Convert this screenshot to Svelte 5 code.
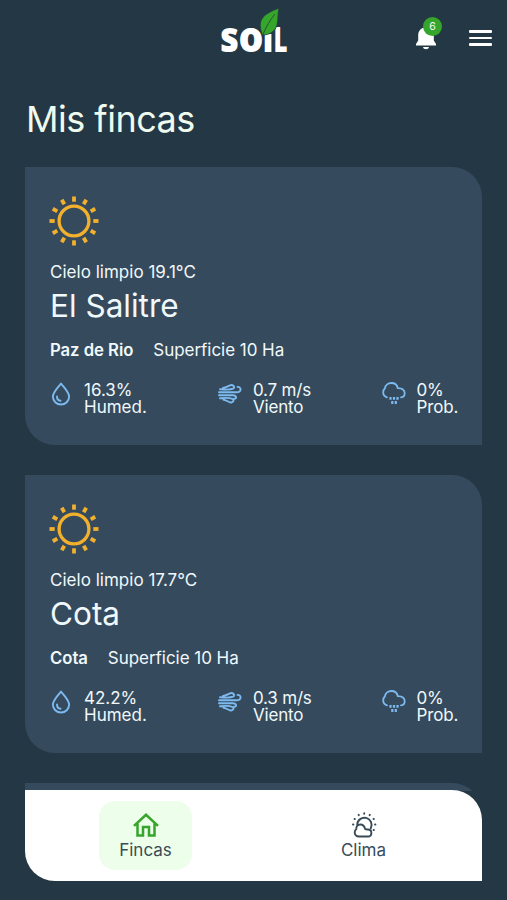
<script>
  const farms = [
    { name: 'El Salitre', sky: 'Cielo limpio 19.1°C', town: 'Paz de Rio', area: 'Superficie 10 Ha', humidity: '16.3%', wind: '0.7 m/s', rain: '0%' },
    { name: 'Cota', sky: 'Cielo limpio 17.7°C', town: 'Cota', area: 'Superficie 10 Ha', humidity: '42.2%', wind: '0.3 m/s', rain: '0%' }
  ];
  const rays = Array.from({ length: 12 }, (_, i) => i * 30);
  const smallRays = [-150, -120, -90, -60, -30, 0, 30, 180];
</script>

<div class="screen">
  <header>
    <svg class="logo" width="70" height="50" viewBox="0 0 70 50" role="img" aria-label="soil">
      <g class="word">
        <text x="0" y="44" textLength="19" lengthAdjust="spacingAndGlyphs">s</text>
        <text x="18.500" y="44" textLength="25" lengthAdjust="spacingAndGlyphs">o</text>
        <text class="short" x="42.500" y="44" textLength="11" lengthAdjust="spacingAndGlyphs">ı</text>
        <text class="tall" x="53.500" y="44" textLength="14" lengthAdjust="spacingAndGlyphs">L</text>
      </g>
      <path d="M59 0C52 3 43 6 40.500 14C39.500 19 41 23 42.500 27C49 27 55 24 57 17C58.500 11 57.500 5 59 0Z" fill="#35a52b" stroke="#243744" stroke-width=".8" />
      <path d="M43 26.500C46 19 50 12 55 6" fill="none" stroke="#23562e" stroke-width="1" />
    </svg>
    <div class="actions">
      <div class="bell">
        <svg width="22" height="24" viewBox="0 0 22 24" fill="#fff">
          <path d="M11 1.500C6 1.500 3.200 5 3.200 9.500V14.500L1 18V19.500H21V18L18.800 14.500V9.500C18.800 5 16 1.500 11 1.500ZM8 21C8.300 22.500 9.500 23.200 11 23.200S13.700 22.500 14 21Z" />
        </svg>
        <span class="badge">6</span>
      </div>
      <div class="menu"><i></i><i></i><i></i></div>
    </div>
  </header>

  <h1>Mis fincas</h1>

  <main>
    {#each farms as farm}
      <article class="card">
        <svg class="sun" width="50" height="50" viewBox="-25 -25 50 50" fill="none" stroke="#f2b02c">
          <circle r="14.900" stroke-width="3.300" />
          {#each rays as angle}
            <path d="M19.300 0H24.500" stroke-width="3.800" transform="rotate({angle})" />
          {/each}
        </svg>
        <p class="sky">{farm.sky}</p>
        <h2>{farm.name}</h2>
        <p class="place"><strong>{farm.town}</strong><span>{farm.area}</span></p>
        <div class="stats">
          <div class="stat">
            <svg class="drop" width="20" height="24" viewBox="0 0 20 24" fill="none" stroke="#7dbaf0" stroke-width="1.900" stroke-linecap="round" stroke-linejoin="round">
              <path d="M10 1.500C7.500 5 1.900 10 1.900 14.800A8.100 7.700 0 0 0 18.100 14.800C18.100 10 12.500 5 10 1.500Z" />
              <path d="M6 14.500C6 17 7.300 18.500 9.500 18.800" />
            </svg>
            <div>{farm.humidity}<br />Humed.</div>
          </div>
          <div class="stat wind">
            <svg width="24" height="20" viewBox="0 0 24 20" fill="none" stroke="#7dbaf0" stroke-width="1.900" stroke-linecap="round" stroke-linejoin="round">
              <path d="M1 8.300H18.500C24 8.300 23.500 2.700 19.500 2.900" />
              <path d="M2 5.200C7 5.700 13 5.700 15 4.700C18 3 14.500.3 12 1.300C9.500 2.300 8 3.700 5 4" />
              <path d="M1 11.300H14.500C19 11.300 19 15 16 14.700" />
              <path d="M2 14.300C7 13.700 12 13.800 14.500 15C17 16.500 14.500 19 12 18.300C9.500 17.700 8 16 5.500 15.700" />
            </svg>
            <div>{farm.wind}<br />Viento</div>
          </div>
          <div class="stat rain">
            <svg width="24" height="24" viewBox="0 0 24 24" fill="none" stroke="#7dbaf0" stroke-width="1.800" stroke-linecap="round" stroke-linejoin="round">
              <path d="M5 15.300C2.500 14.500 1.200 12.500 1.200 10.500C1.200 8.700 1.800 7.300 3 6.300C3.200 3 6.300 1 9.300 1C12.800 1 15.200 3.200 15.800 6.200C20.300 6 22.700 8.300 22.700 11.200C22.700 13.800 21.200 15.200 19 15.300" />
              <path d="M8.500 15V17.700M12 15V17.700M15.500 15V17.700M10.300 19V22M13.800 19V22" stroke-width="2.200" stroke-linecap="butt" />
            </svg>
            <div>{farm.rain}<br />Prob.</div>
          </div>
        </div>
      </article>
    {/each}
    <article class="card"></article>
  </main>

  <nav>
    <div class="tab active">
      <svg width="26" height="24" viewBox="0 0 26 24" fill="none" stroke="#35a52b" stroke-width="2.500">
        <path d="M1 12.800L13 1.800L25 12.800M4.500 10.500V22.500H10V14H16V22.500H21.500V10.500" />
      </svg>
      <span>Fincas</span>
    </div>
    <div class="tab">
      <svg width="26" height="26" viewBox="-.5 0 26 26" fill="none" stroke="#394b59" stroke-width="1.900" stroke-linecap="round" stroke-linejoin="round">
        <path d="M5.700 12.600A7.200 7.200 0 1 1 19.300 16.200" />
        <path d="M7.600 24.500C4.700 24.500 3.200 22.500 3.200 20.500C3.200 19 3.700 17.800 4.900 17C4.300 14.500 6.300 12.500 8.800 12.500C11.400 12.500 13 14.500 13.500 16.800C14.500 17.700 15 17.500 16.500 17.500C21 17.500 21 24.500 16.500 24.500Z" />
        {#each smallRays as angle}
          <path d="M10.800 0H11.200" transform="translate(12.700 12.500) rotate({angle})" />
        {/each}
      </svg>
      <span>Clima</span>
    </div>
  </nav>
</div>

<style>
  :global(body) { margin: 0; background: #243744; }
  * { box-sizing: border-box; }
  .screen {
    height: 900px;
    overflow: hidden;
    position: relative;
    background: #243744;
    color: #f1f8fb;
    font-family: Inter, Roboto, sans-serif;
  }
  header { height: 75px; padding: 8px 15px 0 220px; display: flex; justify-content: space-between; }
  .logo { flex: none; overflow: visible; }
  .word { fill: #fff; font: 900 43px "Noto Sans", "Open Sans", sans-serif; }
  .short { font-size: 31px; }
  .tall { font-size: 35px; }
  .actions { display: flex; padding-top: 18px; gap: 32px; }
  .bell { position: relative; width: 22px; height: 24px; }
  .badge {
    position: absolute;
    left: 8px;
    top: -9px;
    width: 19px;
    height: 19px;
    border-radius: 50%;
    background: #35a52b;
    font-size: 10.500px;
    line-height: 19px;
    text-align: center;
  }
  .menu { width: 23px; padding-top: 4px; display: flex; flex-direction: column; gap: 4px; }
  .menu i { height: 2.500px; border-radius: 1px; background: #fff; }
  h1, h2, p { margin: 0; font-weight: 400; white-space: nowrap; }
  h1 { height: 92px; padding: 20px 0 0 26px; font-size: 36px; line-height: 48px; letter-spacing: -.5px; color: #effbef; }
  main { height: 624px; overflow: hidden; padding: 0 25px; display: flex; flex-direction: column; gap: 30px; }
  .card {
    flex: none;
    height: 278px;
    padding: 29px 24px 0 25px;
    background: #354b5d;
    border-radius: 0 30px 0 30px;
  }
  .sun { display: block; margin-left: -1px; }
  .sky { margin-top: 16px; font-size: 17px; line-height: 20px; letter-spacing: .02px; }
  h2 { margin-top: 4px; font-size: 31.500px; line-height: 40px; }
  .place { margin-top: 14px; display: flex; gap: 20px; font-size: 17px; line-height: 21px; letter-spacing: -.04px; }
  .place strong { font-weight: 600; font-size: 16.700px; }
  .stats { margin-top: 21px; display: flex; font-size: 17px; line-height: 17px; white-space: nowrap; }
  .stat { flex: none; display: flex; gap: 13px; width: 168px; }
  .stat svg { flex: none; }
  .drop { margin-left: 1px; }
  .wind { width: 164px; gap: 11px; letter-spacing: -.2px; }
  .wind svg { margin-top: 2px; }
  .rain { width: 76px; gap: 10.500px; letter-spacing: -.15px; }
  nav {
    position: absolute;
    left: 25px;
    right: 25px;
    bottom: 19px;
    height: 91px;
    padding: 11px 72px 0 74px;
    display: flex;
    justify-content: space-between;
    background: #fff;
    color: #394b59;
    border-radius: 0 30px 0 30px;
  }
  .tab { width: 93px; height: 69px; display: flex; flex-direction: column; align-items: center; padding-top: 11px; border-radius: 16px; font-size: 17px; line-height: 20px; }
  .tab svg { flex: none; height: 26px; }
  .tab span { margin-top: 2px; }
  .active { background: #edfeea; }
</style>
